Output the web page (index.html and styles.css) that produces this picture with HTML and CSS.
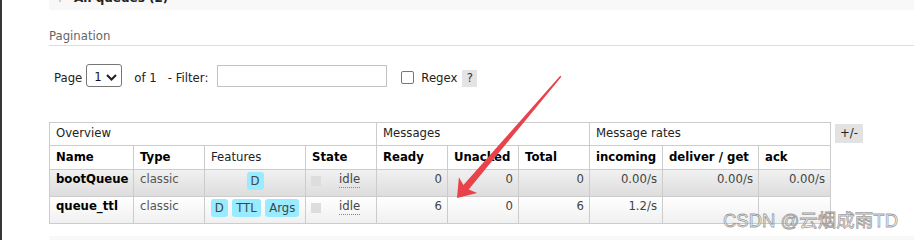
FILE: index.html
```html
<!DOCTYPE html>
<html lang="en">
<head>
<meta charset="utf-8">
<title>Queues</title>
<link rel="stylesheet" href="styles.css">
</head>
<body>
<div class="main">
  <div class="section-bar">
    <h2 class="section-title"><span class="toggle">+</span>All queues (2)</h2>
  </div>

  <h3 class="pag-title">Pagination</h3>
  <div class="pager">
    <span class="lbl">Page</span>
    <span class="select">
      <span class="sel-val">1</span>
      <svg class="chev" width="11" height="7" viewBox="0 0 11 7"><path d="M1 1 L5.5 5.5 L10 1" fill="none" stroke="#1f1f1f" stroke-width="2"/></svg>
    </span>
    <span class="lbl of">of 1</span>
    <span class="lbl filter">- Filter:</span>
    <input class="filter-input" type="text" aria-label="Filter">
    <input class="check" type="checkbox" aria-label="Regex">
    <span class="lbl regex">Regex</span>
    <span class="help">?</span>
  </div>

  <div class="list-wrap">
    <div class="list" role="table">
      <div class="row" role="row">
        <div class="c grp span4">Overview</div>
        <div class="c grp span3">Messages</div>
        <div class="c grp span3">Message rates</div>
      </div>
      <div class="row" role="row">
        <div class="c hd">Name</div>
        <div class="c hd">Type</div>
        <div class="c hd light">Features</div>
        <div class="c hd">State</div>
        <div class="c hd">Ready</div>
        <div class="c hd">Unacked</div>
        <div class="c hd">Total</div>
        <div class="c hd">incoming</div>
        <div class="c hd">deliver / get</div>
        <div class="c hd">ack</div>
      </div>
      <div class="row alt1" role="row">
        <div class="c name">bootQueue</div>
        <div class="c type">classic</div>
        <div class="c feats"><span class="badge">D</span></div>
        <div class="c state"><span class="sq"></span><span class="idle">idle</span></div>
        <div class="c num">0</div>
        <div class="c num">0</div>
        <div class="c num">0</div>
        <div class="c num">0.00/s</div>
        <div class="c num">0.00/s</div>
        <div class="c num">0.00/s</div>
      </div>
      <div class="row alt2" role="row">
        <div class="c name">queue_ttl</div>
        <div class="c type">classic</div>
        <div class="c feats"><span class="badge">D</span><span class="badge">TTL</span><span class="badge">Args</span></div>
        <div class="c state"><span class="sq"></span><span class="idle">idle</span></div>
        <div class="c num">6</div>
        <div class="c num">0</div>
        <div class="c num">6</div>
        <div class="c num">1.2/s</div>
        <div class="c num"></div>
        <div class="c num"></div>
      </div>
    </div>
    <span class="plusminus">+/-</span>
  </div>

  <div class="section-bar bottom"></div>
</div>

<svg class="arrow" width="914" height="240" viewBox="0 0 914 240">
  <polygon points="457,198 477.2,192.9 468.7,189.6 561.4,76.7 560.2,75.7 463.4,185.1 458.9,177.3" fill="#e8434b"/>
</svg>
<div class="watermark">CSDN @云烟成雨TD</div>
</body>
</html>
```

FILE: styles.css
```css
html, body {
  margin: 0;
  padding: 0;
  background: #fff;
}

body {
  position: relative;
  width: 912px;
  height: 240px;
  overflow: hidden;
  border-left: 2px solid #363636;
  font-family: "DejaVu Sans", Verdana, sans-serif;
  font-size: 11.7px;
  line-height: 15px;
  color: #333;
}

.main {
  padding-left: 47px;
}

.section-bar {
  height: 10px;
  background: #f8f8f8;
  overflow: hidden;
}

.section-title {
  margin: -10px 0 0 0;
  padding-left: 6px;
  font-size: 12px;
  line-height: 16px;
  font-weight: bold;
  color: #222;
}

.toggle {
  display: inline-block;
  width: 19px;
  color: #aaa;
  font-weight: normal;
}

.section-bar.bottom {
  margin-top: 12px;
  height: 4px;
}

.pag-title {
  margin: 0;
  padding: 19px 0 1px 0;
  font-size: 11.7px;
  line-height: 15px;
  font-weight: normal;
  color: #666;
  border-bottom: 1px solid #ddd;
}

.pager {
  display: flex;
  align-items: flex-start;
  height: 24px;
  margin-top: 18px;
  padding-left: 5px;
  color: #222;
}

.lbl {
  margin-top: 7px;
  white-space: nowrap;
}

.select {
  box-sizing: border-box;
  display: flex;
  align-items: flex-start;
  width: 36px;
  height: 23px;
  margin-left: 4px;
  padding: 5px 4px 0 7px;
  border: 1px solid #767676;
  border-radius: 3px;
  background: #fff;
  color: #111;
}

.chev {
  margin-left: auto;
  margin-top: 4px;
}

.of { margin-left: 12px; }
.filter { margin-left: 11px; }

.filter-input {
  box-sizing: border-box;
  width: 170px;
  height: 22px;
  margin: 1px 0 0 9px;
  padding: 0 3px;
  border: 1px solid #c2c2c2;
  border-radius: 0;
  background: #fff;
  font: inherit;
}

.check {
  -webkit-appearance: none;
  appearance: none;
  box-sizing: border-box;
  width: 13px;
  height: 13px;
  margin: 7px 0 0 14px;
  border: 1px solid #767676;
  border-radius: 2px;
  background: #fff;
}

.regex { margin-left: 7px; }

.help {
  box-sizing: border-box;
  width: 15px;
  height: 17px;
  margin: 6px 0 0 5px;
  padding-top: 1px;
  background: #e4e4e4;
  color: #333;
  text-align: center;
}

.list-wrap {
  display: flex;
  align-items: flex-start;
  gap: 4px;
  margin-top: 34px;
}

.list {
  display: grid;
  grid-template-columns: 84px 71px 101px 71px 71px 71px 71px 73px 96px 72px;
  grid-template-rows: 23px 24px 27px 27px;
  border-left: 1px solid #ccc;
  border-top: 1px solid #ccc;
}

.row {
  display: contents;
}

.c {
  box-sizing: border-box;
  border-right: 1px solid #ccc;
  border-bottom: 1px solid #ccc;
  padding: 2px 5px 0 6px;
  white-space: nowrap;
  overflow: hidden;
  color: #444;
}

.span4 { grid-column: span 4; }
.span3 { grid-column: span 3; }

.grp {
  padding-top: 3px;
  color: #222;
  background: #fff;
}

.hd {
  padding-top: 4px;
  font-weight: bold;
  color: #000;
  background: #fff;
}

.hd.light {
  font-weight: normal;
  color: #222;
}

.alt1 > .c {
  background: linear-gradient(#f1f1f1, #dddddd);
}

.alt2 > .c {
  background: linear-gradient(#ffffff, #f0f0f0);
}

.name {
  font-weight: bold;
  color: #000;
}

.type {
  color: #555;
}

.num {
  text-align: right;
}

.feats {
  display: flex;
  justify-content: center;
  gap: 4.5px;
  padding-left: 5px;
  padding-right: 5px;
}

.badge {
  display: block;
  height: 18px;
  line-height: 18px;
  padding: 0 4px;
  border-radius: 3px;
  background: #99ebff;
  color: #444;
}

.state {
  display: flex;
  align-items: flex-start;
}

.sq {
  display: block;
  width: 10px;
  height: 10px;
  margin: 4px 0 0 -1px;
  background: #dddddd;
}

.idle {
  display: block;
  margin-left: 18px;
  height: 15px;
  border-bottom: 1px dotted #888;
  color: #444;
}

.plusminus {
  box-sizing: border-box;
  width: 28px;
  height: 19px;
  margin-top: 2px;
  padding-top: 2px;
  background: #e2e2e2;
  color: #222;
  text-align: center;
}

.arrow {
  position: absolute;
  left: -2px;
  top: 0;
  pointer-events: none;
}

.watermark {
  position: absolute;
  left: 721px;
  top: 211px;
  font-family: "Liberation Sans", "Noto Sans CJK SC", sans-serif;
  font-size: 18.5px;
  line-height: 20px;
  white-space: nowrap;
  color: rgba(255, 255, 255, 0.55);
  -webkit-text-stroke: 0.8px rgba(120, 120, 120, 0.75);
  pointer-events: none;
}
```
